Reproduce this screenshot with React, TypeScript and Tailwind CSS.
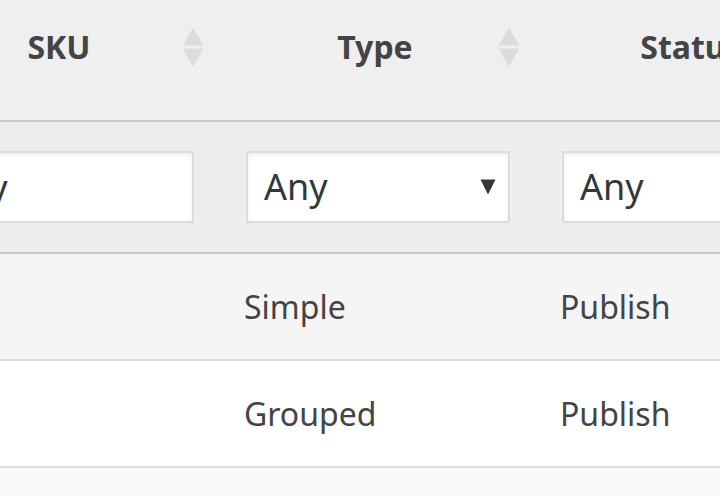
const columns = ["SKU", "Type", "Status"];

const rows = [
  { type: "Simple", status: "Publish", tone: "bg-[#f5f5f5]" },
  { type: "Grouped", status: "Publish", tone: "bg-white" },
];

const field =
  "block h-[72px] w-full appearance-none rounded-none border-2 border-[#dcdcdc] bg-white text-4xl leading-[56px] text-[#32373c] shadow-[inset_0_2px_4px_rgba(0,0,0,0.07)] outline-none";

function SortIcon() {
  return (
    <svg className="h-10 w-[22px]" viewBox="0 0 22 40" fill="#dcdcdc" aria-hidden="true">
      <path d="M11 1 L21.5 18.5 H0.5 Z" />
      <path d="M0.5 21.5 H21.5 L11 39.5 Z" />
    </svg>
  );
}

function FilterSelect({ label }: { label: string }) {
  return (
    <div className="relative">
      <select aria-label={label} className={`${field} pr-10 pl-4`} defaultValue="Any">
        <option>Any</option>
      </select>
      <svg
        className="pointer-events-none absolute top-7 right-3.5 size-4"
        viewBox="0 0 16 16"
        fill="#32373c"
        aria-hidden="true"
      >
        <path d="M0.5 0.5 H15.5 L8 15.5 Z" />
      </svg>
    </div>
  );
}

export default function App() {
  return (
    <main className="min-h-screen overflow-hidden bg-[#f9f9f9] font-['Noto_Sans',sans-serif] text-[32px] leading-[48px] text-[#444]">
      <table className="-ml-24 w-[948px] table-fixed border-separate border-spacing-0">
        <thead>
          <tr className="bg-[#efefef]">
            {columns.map((name) => (
              <th key={name} scope="col" className="border-b-2 border-[#c9c9c9] pt-[23px] pb-[49px] font-bold">
                <button type="button" className="grid w-full grid-cols-[1fr_22px] items-center pr-4">
                  <span className="pl-8">{name}</span>
                  <SortIcon />
                </button>
              </th>
            ))}
          </tr>
          <tr className="bg-[#eee]">
            <td className="border-b-2 border-[#c9c9c9] px-[26px] py-[29px]">
              <input type="text" aria-label="Filter by SKU" defaultValue="Any" className={`${field} px-3`} />
            </td>
            <td className="border-b-2 border-[#c9c9c9] px-[26px]">
              <FilterSelect label="Filter by type" />
            </td>
            <td className="border-b-2 border-[#c9c9c9] px-[26px]">
              <FilterSelect label="Filter by status" />
            </td>
          </tr>
        </thead>
        <tbody>
          {rows.map((row) => (
            <tr key={row.type} className={`h-[107px] ${row.tone}`}>
              <td className="border-b-2 border-[#dcdcdc]" />
              <td className="border-b-2 border-[#dcdcdc] pl-6">{row.type}</td>
              <td className="border-b-2 border-[#dcdcdc] pl-6">{row.status}</td>
            </tr>
          ))}
        </tbody>
      </table>
    </main>
  );
}
